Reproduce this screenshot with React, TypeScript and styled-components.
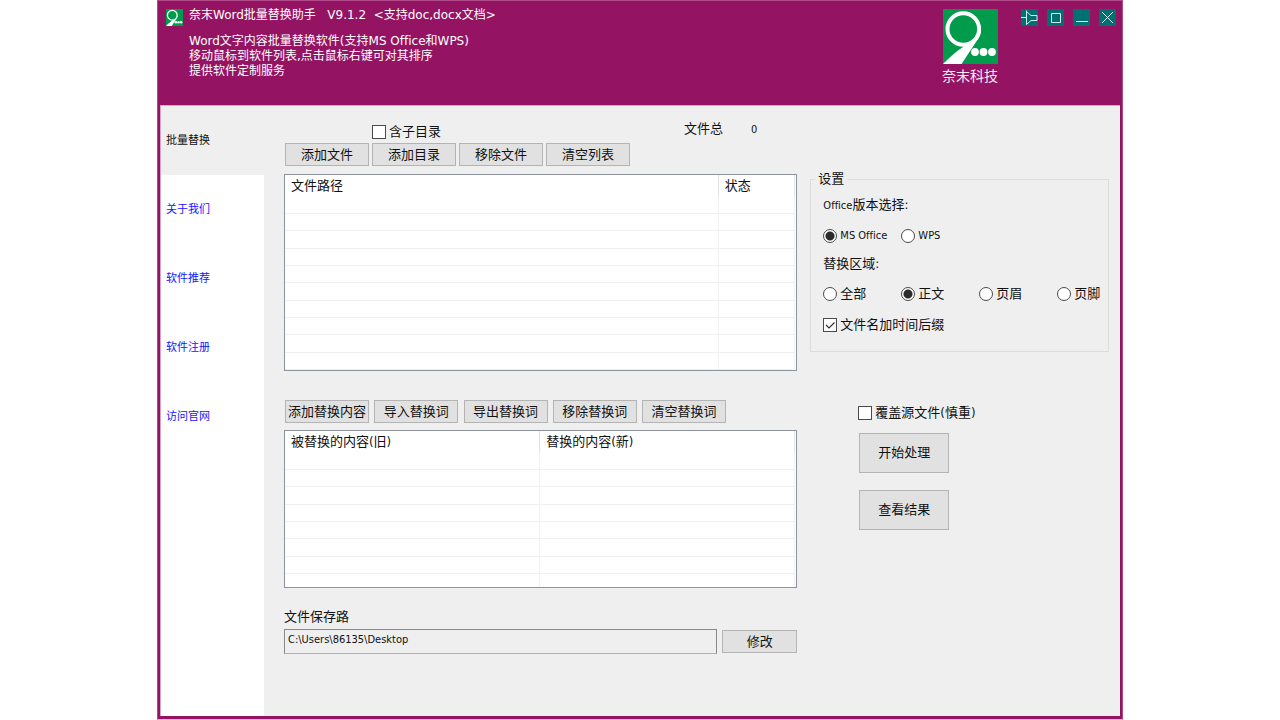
import React from "react";
import styled, { createGlobalStyle } from "styled-components";

const GlobalStyle = createGlobalStyle`
  * { box-sizing: border-box; }
  body {
    margin: 0;
    background: #fff;
    color: #111;
    font: 13px/16px "DejaVu Sans Condensed", "Noto Sans CJK SC", sans-serif;
    font-variant-ligatures: none;
  }
  button, input { font: inherit; color: inherit; }
`;

const Window = styled.div`
  display: flex;
  flex-direction: column;
  width: 100%;
  max-width: 966px;
  min-height: 100vh;
  margin: 0 auto;
  background: #941463;
  border: 1px solid #b04a88;
  border-bottom-color: #e2b9d2;
`;

const Header = styled.header`
  display: flex;
  align-items: flex-start;
  min-height: 104px;
  padding: 8px 6px 0 8px;
  color: #fff;
`;

const AppIcon = styled.span`
  display: flex;
  margin-right: 6px;
`;

const Intro = styled.div`
  flex: 1;
  font: 12px/15px "DejaVu Sans", "Noto Sans CJK SC", sans-serif;
  font-variant-ligatures: none;
  white-space: pre;
`;

const Title = styled.h1`
  margin: 0 0 12px;
  font: inherit;
  line-height: 13px;
`;

const Line = styled.p`
  margin: 0;
`;

const Brand = styled.div`
  display: flex;
  flex-direction: column;
  align-items: flex-end;
  margin-right: 23px;
  font-size: 14px;
  line-height: 24px;
  color: #fbe9f4;
`;

const Controls = styled.div`
  display: flex;
  gap: 9px;
`;

const Control = styled.button`
  display: flex;
  width: 17px;
  height: 17px;
  padding: 0;
  border: 0;
  background: #007172;
`;

const Body = styled.div`
  display: flex;
  flex: 1;
  margin: 0 2px 3px;
  border: 1px solid #d9a5c5;
  border-width: 1px 0 0 1px;
  background: #efefef;
`;

const Sidebar = styled.nav`
  display: flex;
  flex-direction: column;
  flex: 0 0 103px;
  background: #fff;
`;

const NavLink = styled.a<{ $active?: boolean }>`
  display: flex;
  align-items: center;
  height: 69px;
  padding-left: 5px;
  font-size: 11px;
  text-decoration: none;
  color: ${(p) => (p.$active ? "#111" : "#1414ff")};
  background: ${(p) => (p.$active ? "#efefef" : "transparent")};
`;

const Main = styled.main`
  display: grid;
  grid-template-columns: minmax(0, 514fr) minmax(0, 299fr);
  column-gap: 13px;
  flex: 1;
  padding: 15px 11px 0 20px;
`;

const Column = styled.div`
  display: flex;
  flex-direction: column;
`;

const TopRow = styled.div`
  display: flex;
  align-items: flex-start;
  height: 22px;
  padding-left: 88px;
`;

const Check = styled.label`
  display: flex;
  align-items: center;
  gap: 3px;
  height: 22px;
`;

const Total = styled.div`
  display: flex;
  gap: 28px;
  margin-left: auto;
  margin-right: 40px;
`;

const Count = styled.output`
  font-size: 11px;
  line-height: 18px;
`;

const Toolbar = styled.div<{ $spread?: boolean }>`
  display: flex;
  gap: 3px;
  max-width: 442px;
  padding-left: 1px;
  margin: ${(p) => (p.$spread ? "29px 0 7px" : "0 0 8px")};
  justify-content: ${(p) => (p.$spread ? "space-between" : "flex-start")};
`;

const Button = styled.button<{ $size?: "large" | "wide" }>`
  width: ${(p) => (p.$size === "large" ? 90 : p.$size === "wide" ? 75 : 84)}px;
  height: ${(p) => (p.$size === "large" ? 40 : 23)}px;
  padding: 0;
  border: 1px solid #b4b4b4;
  background: #e1e1e1;
  line-height: 20px;
  white-space: nowrap;
`;

const ListBox = styled.div<{ $height: number }>`
  height: ${(p) => p.$height}px;
  padding-right: 1px;
  overflow: hidden;
  border: 1px solid #8e929d;
  background: #fff;
`;

const Table = styled.table`
  width: 100%;
  table-layout: fixed;
  border-spacing: 0;
`;

const HeadCell = styled.th<{ $share: string }>`
  width: ${(p) => p.$share};
  height: 21px;
  padding: 0 0 0 6px;
  border-right: 1px solid #e2e2e2;
  font-weight: 400;
  text-align: left;
`;

const Row = styled.tr`
  height: 17px;
  &:first-child { height: 18px; }
  &:nth-child(3n) { height: 18px; }
`;

const Cell = styled.td`
  padding: 0;
  border-bottom: 1px solid #f0f0f0;
  border-right: 1px solid #f0f0f0;
`;

const PathLabel = styled.label`
  margin: 21px 0 4px;
`;

const PathRow = styled.div`
  display: flex;
  align-items: center;
  gap: 5px;
`;

const PathInput = styled.input`
  flex: 1;
  min-width: 0;
  height: 25px;
  padding: 0 3px 4px;
  border: 1px solid #8a8a8a;
  border-bottom-color: #b0b0b0;
  background: #efefef;
  font-size: 11px;
`;

const Settings = styled.fieldset`
  display: flex;
  flex-direction: column;
  height: 181px;
  min-width: 0;
  margin: 50px 0 0;
  padding: 8px 12px 0;
  border: 1px solid #dcdcdc;
`;

const Legend = styled.legend`
  margin-left: -8px;
  padding: 0 3px;
`;

const GroupTitle = styled.div`
  line-height: 20px;
`;

const Small = styled.span`
  font-size: 11px;
`;

const Options = styled.div`
  display: grid;
  grid-template-columns: repeat(4, 78px);
  margin: 10px 0 8px;
  line-height: 20px;
`;

const Option = styled.label`
  display: flex;
  align-items: center;
  gap: 3px;
  white-space: nowrap;
`;

const Radio = styled.input.attrs({ type: "radio" })`
  appearance: none;
  width: 14px;
  height: 14px;
  margin: 0;
  border: 1px solid #4a4a4a;
  border-radius: 50%;
  background: #fff;
  &:checked { background: radial-gradient(circle, #2b2b2b 4px, #fff 5px); }
`;

const BoxWrap = styled.span`
  display: grid;
  svg { grid-area: 1 / 1; pointer-events: none; }
`;

const Box = styled.input.attrs({ type: "checkbox" })`
  grid-area: 1 / 1;
  appearance: none;
  width: 14px;
  height: 14px;
  margin: 0;
  border: 1px solid #4a4a4a;
  background: #fff;
  & + svg { visibility: hidden; }
  &:checked + svg { visibility: visible; }
`;

const Suffix = styled.div`
  margin-top: 2px;
`;

const Actions = styled.div`
  display: flex;
  flex-direction: column;
  align-items: flex-start;
  margin: 50px 0 0 48px;
`;

const ActionButtons = styled.div`
  display: flex;
  flex-direction: column;
  gap: 17px;
  margin: 9px 0 0 1px;
`;

function CheckBox({ children, checked }: { children: React.ReactNode; checked?: boolean }) {
  return (
    <Check>
      <BoxWrap>
        <Box defaultChecked={checked} />
        <svg width="14" height="14" viewBox="0 0 14 14" fill="none" stroke="#333" strokeWidth="1.2">
          <path d="M3 7l3 3 5.5-5.5" />
        </svg>
      </BoxWrap>
      {children}
    </Check>
  );
}

function Logo({ size }: { size: number }) {
  return (
    <svg width={size} height={size} viewBox="0 0 55 55" aria-label="奈末科技">
      <rect width="55" height="55" fill="#009c4c" />
      <path d="M0 55C6 49 12 43 20 38L29 33L38 21C38 25 36 29 33 33L18.500 55Z" fill="#fff" />
      <circle cx="20.300" cy="20" r="15.800" fill="#009c4c" stroke="#fff" strokeWidth="4" />
      <g fill="#fff">
        <circle cx="32" cy="43" r="3.900" />
        <circle cx="40.500" cy="43" r="3.900" />
        <circle cx="49" cy="43" r="3.900" />
      </g>
    </svg>
  );
}

const controls = [
  { label: "置顶", d: "M0 8.500h5.500M5.500 1.500v14M5.500 2.500l4.500 4h6v5h-6l-4.500 4" },
  { label: "最大化", d: "M4.500 4.500h9v9h-9z" },
  { label: "最小化", d: "M3 12.500h12" },
  { label: "关闭", d: "M3 3l11 11M14 3L3 14" },
];

const navItems = ["批量替换", "关于我们", "软件推荐", "软件注册", "访问官网"];
const fileActions = ["添加文件", "添加目录", "移除文件", "清空列表"];
const wordActions = ["添加替换内容", "导入替换词", "导出替换词", "移除替换词", "清空替换词"];

function List(props: { height: number; rows: number; columns: { name: string; share: string }[] }) {
  return (
    <ListBox $height={props.height}>
      <Table>
        <thead>
          <tr>
            {props.columns.map((c) => (
              <HeadCell key={c.name} $share={c.share}>{c.name}</HeadCell>
            ))}
          </tr>
        </thead>
        <tbody>
          {Array.from({ length: props.rows }, (_, i) => (
            <Row key={i}>
              {props.columns.map((c) => <Cell key={c.name} />)}
            </Row>
          ))}
        </tbody>
      </Table>
    </ListBox>
  );
}

export default function App() {
  return (
    <>
      <GlobalStyle />
      <Window>
        <Header>
          <AppIcon><Logo size={17} /></AppIcon>
          <Intro>
            <Title>{"奈末Word批量替换助手   V9.1.2  <支持doc,docx文档>"}</Title>
            <Line>Word文字内容批量替换软件(支持MS Office和WPS)</Line>
            <Line>移动鼠标到软件列表,点击鼠标右键可对其排序</Line>
            <Line>提供软件定制服务</Line>
          </Intro>
          <Brand>
            <Logo size={55} />
            奈末科技
          </Brand>
          <Controls>
            {controls.map((c) => (
              <Control key={c.label} type="button" aria-label={c.label}>
                <svg width="17" height="17" viewBox="0 0 17 17" fill="none" stroke="#d5eeee">
                  <path d={c.d} />
                </svg>
              </Control>
            ))}
          </Controls>
        </Header>
        <Body>
          <Sidebar>
            {navItems.map((n, i) => (
              <NavLink key={n} href="#" $active={i === 0}>{n}</NavLink>
            ))}
          </Sidebar>
          <Main>
            <Column>
              <TopRow>
                <CheckBox>含子目录</CheckBox>
                <Total>文件总<Count>0</Count></Total>
              </TopRow>
              <Toolbar>
                {fileActions.map((a) => <Button key={a} type="button">{a}</Button>)}
              </Toolbar>
              <List
                height={197}
                rows={10}
                columns={[{ name: "文件路径", share: "85%" }, { name: "状态", share: "15%" }]}
              />
              <Toolbar $spread>
                {wordActions.map((a) => <Button key={a} type="button">{a}</Button>)}
              </Toolbar>
              <List
                height={158}
                rows={8}
                columns={[{ name: "被替换的内容(旧)", share: "50%" }, { name: "替换的内容(新)", share: "50%" }]}
              />
              <PathLabel htmlFor="save-path">文件保存路</PathLabel>
              <PathRow>
                <PathInput id="save-path" readOnly value="C:\Users\86135\Desktop" />
                <Button type="button" $size="wide">修改</Button>
              </PathRow>
            </Column>
            <Column>
              <Settings>
                <Legend>设置</Legend>
                <GroupTitle><Small>Office</Small>版本选择:</GroupTitle>
                <Options>
                  <Option><Radio name="office" defaultChecked /><Small>MS Office</Small></Option>
                  <Option><Radio name="office" /><Small>WPS</Small></Option>
                </Options>
                <GroupTitle>替换区域:</GroupTitle>
                <Options>
                  <Option><Radio name="area" />全部</Option>
                  <Option><Radio name="area" defaultChecked />正文</Option>
                  <Option><Radio name="area" />页眉</Option>
                  <Option><Radio name="area" />页脚</Option>
                </Options>
                <Suffix>
                  <CheckBox checked>文件名加时间后缀</CheckBox>
                </Suffix>
              </Settings>
              <Actions>
                <CheckBox>覆盖源文件(慎重)</CheckBox>
                <ActionButtons>
                  <Button type="button" $size="large">开始处理</Button>
                  <Button type="button" $size="large">查看结果</Button>
                </ActionButtons>
              </Actions>
            </Column>
          </Main>
        </Body>
      </Window>
    </>
  );
}
